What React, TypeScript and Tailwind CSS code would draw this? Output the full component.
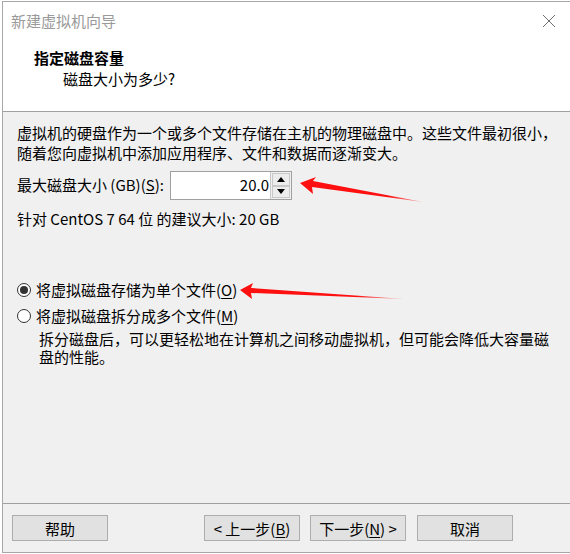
import React from "react";

const font = { fontFamily: '"Noto Sans CJK SC", "Noto Sans", sans-serif' };

function U({ children }: { children: React.ReactNode }) {
  return <span className="underline underline-offset-2">{children}</span>;
}

function Btn({ children }: { children: React.ReactNode }) {
  return (
    <button className="h-[26px] w-[96px] border border-[#adadad] bg-[#e1e1e1] text-[15px] leading-none text-black">
      {children}
    </button>
  );
}

function Radio({ checked, children }: { checked?: boolean; children: React.ReactNode }) {
  return (
    <div className="flex items-center h-[22px]">
      <span className="ml-[14px] flex h-[14px] w-[14px] items-center justify-center rounded-full border border-[#333] bg-white">
        {checked && <span className="h-[8px] w-[8px] rounded-full bg-[#333]" />}
      </span>
      <span className="ml-[5px]">{children}</span>
    </div>
  );
}

export default function App() {
  return (
    <div className="relative h-[554px] w-[570px] overflow-hidden bg-white" style={font}>
      <div className="ml-[2px] mt-[1px] flex h-[552px] flex-col border-b border-l border-t border-[#a8a8a8] bg-[#f0f0f0] text-[15px] text-black">
        {/* 标题 + 页眉 */}
        <div className="h-[110px] shrink-0 border-b border-[#a0a0a0] bg-white">
          <div className="flex h-[38px] items-center justify-between pl-[8px] pr-[14px]">
            <span className="text-[15px] text-[#9a9a9a]">新建虚拟机向导</span>
            <svg width="14" height="14" viewBox="0 0 14 14">
              <path d="M1 1L13 13M13 1L1 13" stroke="#6e6e6e" strokeWidth="1" />
            </svg>
          </div>
          <div className="pl-[31px] pt-[8px] text-[15px] font-bold leading-[20px]">指定磁盘容量</div>
          <div className="pl-[60px] pt-[1px] text-[15px] leading-[20px]">磁盘大小为多少?</div>
        </div>

        {/* 正文 */}
        <div className="flex-1 pl-[14px] pt-[11px]">
          <p className="leading-[20px]">
            虚拟机的硬盘作为一个或多个文件存储在主机的物理磁盘中。这些文件最初很小，
            <br />
            随着您向虚拟机中添加应用程序、文件和数据而逐渐变大。
          </p>
          <div className="mt-[8px] flex items-center">
            <span>
              最大磁盘大小 (GB)(<U>S</U>):
            </span>
            <div className="ml-[6px] flex h-[29px] border border-[#a0a0a0] bg-white">
              <div className="flex w-[99px] items-center justify-end pr-[1px]">20.0</div>
              <div className="flex w-[21px] flex-col border-l border-[#c8c8c8] bg-[#f0f0f0] p-[1px]">
                <div className="flex flex-1 items-center justify-center border border-[#c8c8c8] bg-[#ececec]">
                  <svg width="8" height="5" viewBox="0 0 8 5"><path d="M0 5L4 0L8 5Z" fill="#000" /></svg>
                </div>
                <div className="flex flex-1 items-center justify-center border border-[#c8c8c8] bg-[#ececec]">
                  <svg width="8" height="5" viewBox="0 0 8 5"><path d="M0 0L8 0L4 5Z" fill="#000" /></svg>
                </div>
              </div>
            </div>
          </div>
          <p className="mt-[9px] leading-[20px]">针对 CentOS 7 64 位 的建议大小: 20 GB</p>

          <div className="-ml-[14px] mt-[50px]">
            <Radio checked>
              将虚拟磁盘存储为单个文件(<U>O</U>)
            </Radio>
            <div className="mt-[4px]">
              <Radio>
                将虚拟磁盘拆分成多个文件(<U>M</U>)
              </Radio>
            </div>
            <p className="ml-[36px] mt-[3px] leading-[18px]">
              拆分磁盘后，可以更轻松地在计算机之间移动虚拟机，但可能会降低大容量磁
              <br />
              盘的性能。
            </p>
          </div>
        </div>

        {/* 按钮栏 */}
        <div className="h-[49px] shrink-0 border-t border-[#a0a0a0]">
          <div className="flex items-center pl-[9px] pt-[11px]">
            <Btn>帮助</Btn>
            <div className="ml-[96px] flex gap-[10px]">
              <Btn>
                &lt; 上一步(<U>B</U>)
              </Btn>
              <Btn>
                下一步(<U>N</U>) &gt;
              </Btn>
              <div className="ml-px">
                <Btn>取消</Btn>
              </div>
            </div>
          </div>
        </div>
      </div>

      {/* 红色箭头标注 */}
      <svg className="pointer-events-none absolute left-0 top-0" width="570" height="554">
        <defs>
          <linearGradient id="fade1" x1="300" y1="0" x2="425" y2="0" gradientUnits="userSpaceOnUse">
            <stop offset="0.7" stopColor="#ff1010" />
            <stop offset="1" stopColor="#ff1010" stopOpacity="0.3" />
          </linearGradient>
          <linearGradient id="fade2" x1="240" y1="0" x2="405" y2="0" gradientUnits="userSpaceOnUse">
            <stop offset="0.7" stopColor="#ff1010" />
            <stop offset="1" stopColor="#ff1010" stopOpacity="0.3" />
          </linearGradient>
        </defs>
        <polygon points="300,183 316,177 313,181 423,202 312,187 313,194" fill="url(#fade1)" />
        <polygon points="240,290 253,283 251,288 404,299 251,293 252,299" fill="url(#fade2)" />
      </svg>
    </div>
  );
}
